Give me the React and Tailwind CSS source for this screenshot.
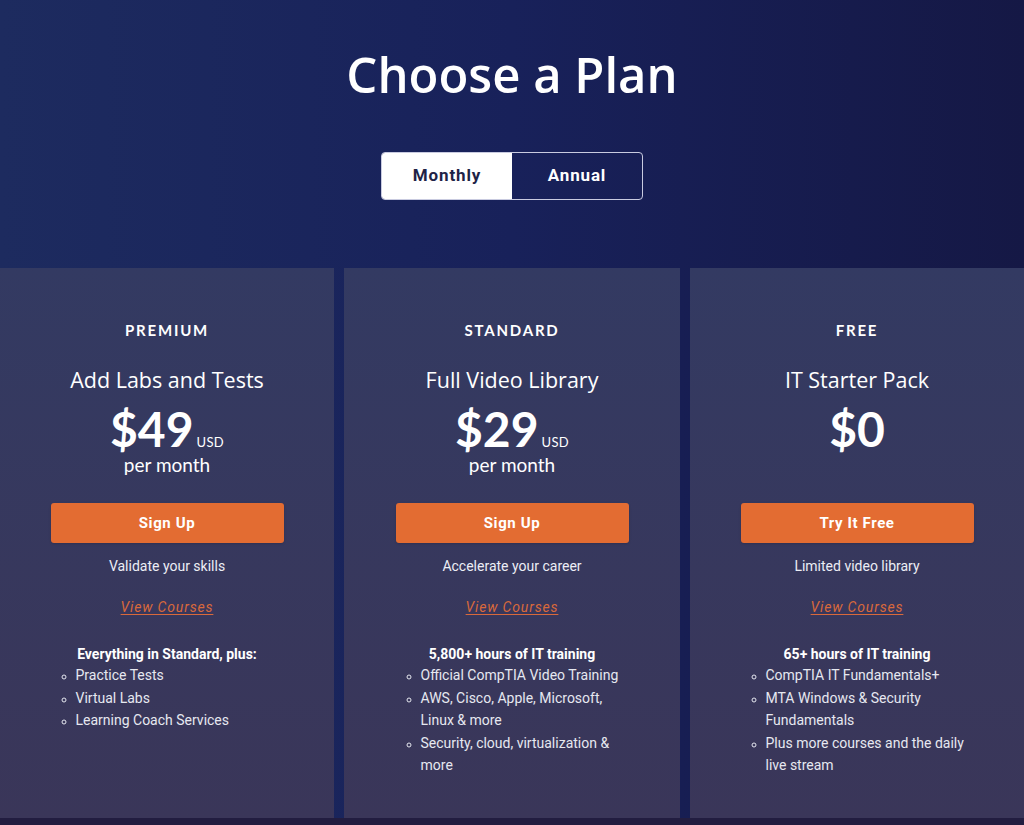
import React, { useState } from 'react'

const plans = [
  {
    tier: 'PREMIUM',
    title: 'Add Labs and Tests',
    price: '$49',
    usd: true,
    cta: 'Sign Up',
    tagline: 'Validate your skills',
    heading: 'Everything in Standard, plus:',
    items: ['Practice Tests', 'Virtual Labs', 'Learning Coach Services'],
  },
  {
    tier: 'STANDARD',
    title: 'Full Video Library',
    price: '$29',
    usd: true,
    cta: 'Sign Up',
    tagline: 'Accelerate your career',
    heading: '5,800+ hours of IT training',
    items: [
      'Official CompTIA Video Training',
      'AWS, Cisco, Apple, Microsoft, Linux & more',
      'Security, cloud, virtualization & more',
    ],
  },
  {
    tier: 'FREE',
    title: 'IT Starter Pack',
    price: '$0',
    usd: false,
    cta: 'Try It Free',
    tagline: 'Limited video library',
    heading: '65+ hours of IT training',
    items: [
      'CompTIA IT Fundamentals+',
      'MTA Windows & Security Fundamentals',
      'Plus more courses and the daily live stream',
    ],
  },
]

function PlanCard({ plan }) {
  return (
    <div className="h-[550px] bg-gradient-to-b from-[#333a62] to-[#3a3659] pt-[52px] text-white">
      <div className="text-center">
        <div className="font-['Lato',sans-serif] text-[15px] font-bold tracking-[0.12em] leading-5">{plan.tier}</div>
        <div className="mt-[26px] font-['Open_Sans',sans-serif] text-[21.5px] leading-7">{plan.title}</div>
        <div className="mt-[9px] flex h-[52px] items-baseline justify-center font-['Lato',sans-serif] leading-[52px]">
          <span className="text-[48px] font-bold">{plan.price}</span>
          {plan.usd && <span className="ml-[3px] text-[13px] tracking-wide">USD</span>}
        </div>
        <div className="h-[20px] font-['Lato',sans-serif] text-[19px] leading-[20px]">{plan.usd ? 'per month' : ''}</div>
      </div>

      <div className="mx-auto mt-[28px] w-[233px] font-['Roboto',sans-serif]">
        <button className="h-[40px] w-full rounded-[3px] bg-[#e36c32] text-[15px] font-bold tracking-[0.04em] text-white shadow-sm">
          {plan.cta}
        </button>
        <p className="mt-[13px] text-center text-[14px] leading-5 text-[#eceef5]">{plan.tagline}</p>
        <p className="mt-[21px] text-center text-[14px] leading-5">
          <a href="#" className="italic tracking-[0.06em] text-[#d9693b] underline underline-offset-2">
            View Courses
          </a>
        </p>
        <p className="mt-[27px] text-center text-[14px] font-bold leading-5">{plan.heading}</p>
        <ul className="w-[233px] list-[circle] pl-[25px] text-[14px] leading-[22.5px] text-[#e6e8f0] marker:text-[12px]">
          {plan.items.map((item) => (
            <li key={item}>{item}</li>
          ))}
        </ul>
      </div>
    </div>
  )
}

export default function App() {
  const [billing, setBilling] = useState('monthly')

  return (
    <div className="min-h-[825px] bg-[#221d40]">
      <div className="bg-gradient-to-r from-[#1d2b5f] via-[#18215a] to-[#151845]">
        <div className="pt-[43px] pb-[68px] text-center">
          <h1 className="font-['Open_Sans',sans-serif] text-[49px] font-semibold leading-[62px] text-white">
            Choose a Plan
          </h1>
          <div className="mx-auto mt-[47px] flex h-[48px] w-[262px] overflow-hidden rounded-[4px] border border-[#c9cbe0] font-['Roboto',sans-serif] text-[17px] font-bold tracking-[0.05em]">
            <button
              onClick={() => setBilling('monthly')}
              className={`flex-1 ${billing === 'monthly' ? 'bg-white text-[#1e2346]' : 'text-white'}`}
            >
              Monthly
            </button>
            <button
              onClick={() => setBilling('annual')}
              className={`flex-1 ${billing === 'annual' ? 'bg-white text-[#1e2346]' : 'text-white'}`}
            >
              Annual
            </button>
          </div>
        </div>
        <div className="grid grid-cols-[334px_336px_334px] gap-[10px]">
          {plans.map((p) => (
            <PlanCard key={p.tier} plan={p} />
          ))}
        </div>
      </div>
    </div>
  )
}
